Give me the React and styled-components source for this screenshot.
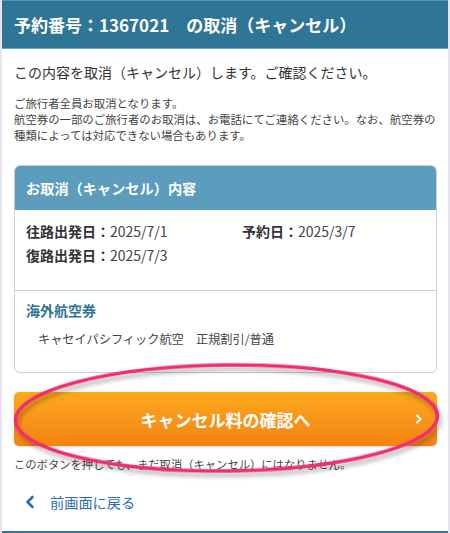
import React from "react";
import styled, { createGlobalStyle } from "styled-components";

const GlobalStyle = createGlobalStyle`
  html, body { margin: 0; padding: 0; background: #ffffff; }
  body { font-family: "Noto Sans CJK JP", "Noto Sans", sans-serif; color: #333; }
  * { box-sizing: border-box; }
`;

const Page = styled.div`
  position: relative;
  width: 450px;
  height: 533px;
  overflow: hidden;
  background: #fff;
  border-left: 2px solid #e9e5ee;
  border-right: 2px solid #e9e5ee;
  display: flex;
  flex-direction: column;
`;

const Header = styled.header`
  height: 49px;
  background: #2f7596;
  border-top: 1px solid #5b92ad;
  border-bottom: 1px solid #6ea3bb;
  display: flex;
  align-items: center;
  padding-left: 12px;
  color: #fff;
  font-weight: 700;
  font-size: 17px;
  letter-spacing: 0;
  white-space: pre;
`;

const Content = styled.main`
  flex: 1;
  padding: 0 11px 0 12px;
  display: flex;
  flex-direction: column;
`;

const Lead = styled.p`
  margin: 13px 0 0;
  font-size: 14px;
  line-height: 20px;
  color: #333;
  white-space: nowrap;
`;

const Notes = styled.p`
  margin: 13px 0 0;
  font-size: 11.4px;
  line-height: 16px;
  color: #444;
  white-space: nowrap;
`;

const Card = styled.section`
  margin-top: 22px;
  border: 1px solid #cfcfcf;
  border-radius: 6px;
  overflow: hidden;
  background: #fff;
`;

const CardHeader = styled.h2`
  margin: 0;
  height: 44px;
  background: #5c9dbd;
  color: #fff;
  font-size: 14.2px;
  font-weight: 700;
  display: flex;
  align-items: center;
  padding-left: 11px;
`;

const CardBody = styled.div`
  padding: ${(p) => p.$pad || "9px 11px 23px"};
  border-top: ${(p) => (p.$divider ? "1px solid #cccccc" : "none")};
`;

const DateGrid = styled.div`
  display: grid;
  grid-template-columns: 216px 1fr;
  row-gap: 0;
`;

const Field = styled.div`
  font-size: 14px;
  line-height: 24px;
  color: #444;
  white-space: nowrap;
`;

const Label = styled.span`
  font-weight: 700;
  color: #333;
`;

const SectionTitle = styled.h3`
  margin: 0;
  font-size: 14px;
  line-height: 20px;
  font-weight: 700;
  color: #2f7596;
`;

const Item = styled.p`
  margin: 9px 0 0;
  padding-left: 12px;
  font-size: 12.2px;
  line-height: 20px;
  color: #444;
  white-space: pre;
`;

const PrimaryButton = styled.button`
  margin-top: 19px;
  height: 54px;
  width: 100%;
  border: none;
  border-radius: 5px;
  background: linear-gradient(to bottom, #fbaa1c 0%, #f8951a 50%, #f5830e 100%);
  box-shadow: 0 1px 2px rgba(0, 0, 0, 0.15);
  color: #fff;
  font-family: inherit;
  font-size: 17px;
  font-weight: 700;
  display: flex;
  align-items: center;
  justify-content: center;
  position: relative;
  cursor: pointer;
`;

const ButtonChevron = styled.svg`
  position: absolute;
  right: 14px;
  top: 50%;
  transform: translateY(-50%);
`;

const Caution = styled.p`
  margin: 10px 0 0;
  font-size: 11.3px;
  line-height: 16px;
  color: #444;
  white-space: nowrap;
`;

const BackLink = styled.a`
  margin-top: 20px;
  display: flex;
  align-items: center;
  gap: 15px;
  padding-left: 11px;
  font-size: 14.2px;
  line-height: 20px;
  color: #2d6db4;
  text-decoration: none;
`;

const FooterBar = styled.div`
  height: 2px;
  background: #2f7596;
`;

const Annotation = styled.svg`
  position: absolute;
  left: -2px;
  top: 0;
  pointer-events: none;
`;

export default function App() {
  return (
    <>
      <GlobalStyle />
      <Page>
        <Header>予約番号：1367021　の取消（キャンセル）</Header>
        <Content>
          <Lead>この内容を取消（キャンセル）します。ご確認ください。</Lead>
          <Notes>
            ご旅行者全員お取消となります。
            <br />
            航空券の一部のご旅行者のお取消は、お電話にてご連絡ください。なお、航空券の
            <br />
            種類によっては対応できない場合もあります。
          </Notes>
          <Card>
            <CardHeader>お取消（キャンセル）内容</CardHeader>
            <CardBody>
              <DateGrid>
                <Field>
                  <Label>往路出発日：</Label>2025/7/1
                </Field>
                <Field>
                  <Label>予約日：</Label>2025/3/7
                </Field>
                <Field>
                  <Label>復路出発日：</Label>2025/7/3
                </Field>
              </DateGrid>
            </CardBody>
            <CardBody $divider>
              <SectionTitle>海外航空券</SectionTitle>
              <Item>キャセイパシフィック航空　正規割引/普通</Item>
            </CardBody>
          </Card>
          <PrimaryButton>
            キャンセル料の確認へ
            <ButtonChevron width="8" height="10" viewBox="0 0 8 10">
              <polyline
                points="2,1.5 5.5,5 2,8.5"
                fill="none"
                stroke="#fff"
                strokeWidth="2.2"
                strokeLinecap="round"
                strokeLinejoin="round"
              />
            </ButtonChevron>
          </PrimaryButton>
          <Caution>このボタンを押しても、まだ取消（キャンセル）にはなりません。</Caution>
          <BackLink href="#">
            <svg width="10" height="14" viewBox="0 0 10 14">
              <polyline
                points="7.5,2 2.5,7 7.5,12"
                fill="none"
                stroke="#2d6db4"
                strokeWidth="2.6"
                strokeLinecap="round"
                strokeLinejoin="round"
              />
            </svg>
            前画面に戻る
          </BackLink>
        </Content>
        <FooterBar />
        <Annotation width="450" height="533" viewBox="0 0 450 533">
          <defs>
            <filter id="sh" x="-10%" y="-30%" width="120%" height="160%">
              <feDropShadow dx="2" dy="4" stdDeviation="2" floodColor="#000" floodOpacity="0.3" />
            </filter>
          </defs>
          <ellipse
            cx="226.5"
            cy="418"
            rx="211"
            ry="53"
            fill="none"
            stroke="#f02f6e"
            strokeWidth="3.5"
            transform="rotate(-0.6 226.5 418)"
            filter="url(#sh)"
          />
        </Annotation>
      </Page>
    </>
  );
}
